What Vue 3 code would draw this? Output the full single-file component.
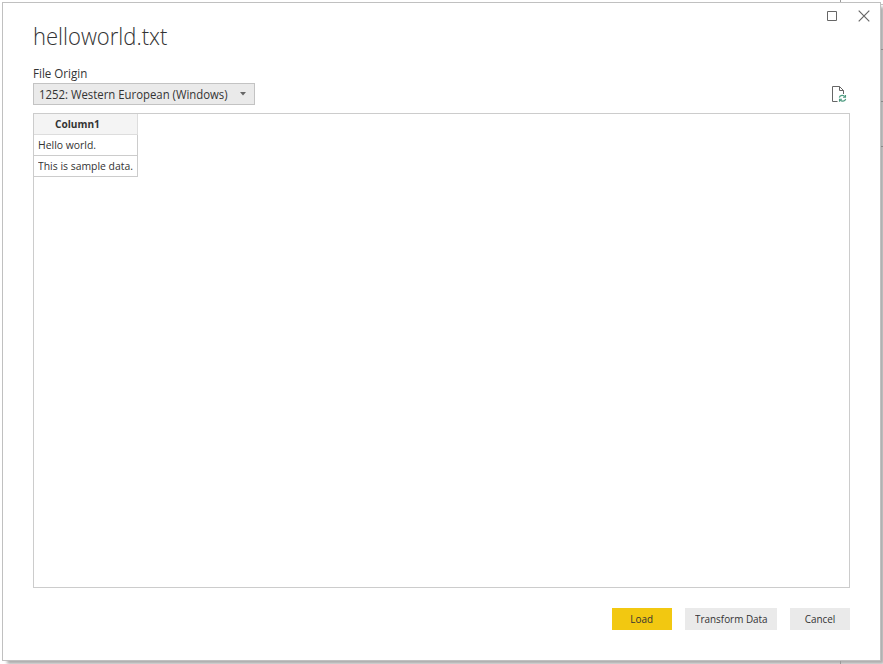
<script setup>
const columns = ['Column1']
const rows = [['Hello world.'], ['This is sample data.']]
const actions = [
  { label: 'Load', kind: 'primary' },
  { label: 'Transform Data', kind: 'wide' },
  { label: 'Cancel', kind: 'plain' },
]
</script>

<template>
  <div class="desktop">
    <i class="tick tick-top"></i>
    <i class="tick tick-bottom"></i>
    <i class="edge edge-a"></i>
    <i class="edge edge-b"></i>
    <i class="edge edge-c"></i>
    <i class="edge edge-d"></i>
    <section class="dialog">
      <div class="window-controls">
        <svg width="12" height="12" viewBox="0 0 12 12"><path d="M1.5 1.5h9v9h-9z" fill="none" stroke="#666" /></svg>
        <svg width="12" height="12" viewBox="0 0 12 12"><path d="M.7.7l10.6 10.6M11.3.7L.7 11.3" fill="none" stroke="#666" stroke-width="1.2" /></svg>
      </div>
      <h1><span>helloworld.txt</span></h1>
      <div class="label"><span>File Origin</span></div>
      <div class="toolbar">
        <button class="select">
          <span>1252: Western European (Windows)</span>
          <svg width="6" height="4" viewBox="0 0 6 4"><path d="M0 0h6L3 3.6z" fill="#666" /></svg>
        </button>
        <svg class="refresh" width="16" height="18" viewBox="0 0 16 18">
          <path d="M6.500 16.500h-5v-15h7l4 4v3.500M8.500 1.500v4h4" fill="none" stroke="#666" />
          <path d="M8.300 12.500c.8-2.700 4.200-2.800 5.600-.8M14.700 14c-.8 2.700-4.200 2.800-5.600.8" fill="none" stroke="#4d9b80" stroke-width="1.200" />
          <path d="M14.500 10v2.300H12M8.500 16.700v-2.400H11" fill="none" stroke="#4d9b80" stroke-width="1.100" />
        </svg>
      </div>
      <div class="preview">
        <table>
          <thead><tr><th v-for="c in columns" :key="c"><span>{{ c }}</span></th></tr></thead>
          <tbody>
            <tr v-for="(r, i) in rows" :key="i"><td v-for="v in r" :key="v"><span>{{ v }}</span></td></tr>
          </tbody>
        </table>
      </div>
      <footer>
        <button v-for="a in actions" :key="a.label" :class="['action', a.kind]"><span>{{ a.label }}</span></button>
      </footer>
    </section>
  </div>
</template>

<style>
body { margin: 0; background: #fff; }
</style>

<style scoped>
* { box-sizing: border-box; }
.desktop { position: relative; width: 883px; height: 664px; overflow: hidden; padding: 2px 0 0 2px; font-family: "Open Sans", "Noto Sans", sans-serif; color: #333; }
.dialog { position: relative; width: 879px; height: 659px; display: flex; flex-direction: column; padding: 0 30px; background: #fff; border: 1px solid #c0c0c0; box-shadow: 4px 4px 3px -1px rgba(0, 0, 0, .32); }
.tick { position: absolute; left: 840px; width: 1px; background: #999; }
.tick-top { top: 0; height: 2px; }
.tick-bottom { top: 661px; height: 3px; z-index: 1; }
.edge { position: absolute; left: 881px; width: 2px; height: 1px; background: #888; z-index: 1; }
.edge-a { top: 4px; background: #c0c0c0; }
.edge-b { top: 49px; }
.edge-c { top: 101px; }
.edge-d { top: 146px; }
.window-controls { position: absolute; top: 7px; right: 10px; display: flex; gap: 20px; }
.window-controls svg { display: block; }
span { display: inline-block; white-space: nowrap; transform-origin: left center; }
h1 { height: 36px; margin: 15px 0 0; font-size: 23px; line-height: 36px; font-weight: 300; }
h1 span { transform: scaleX(.957); }
.label { height: 18px; margin-top: 9px; padding-top: 2px; font-size: 12px; line-height: 18px; }
.label span { transform: scaleX(.965); }
.toolbar { height: 22px; margin-top: 2px; display: flex; justify-content: space-between; }
button { font-family: inherit; color: inherit; margin: 0; }
.select { width: 222px; height: 22px; padding: 0 8px 0 5px; border: 1px solid #c3c3c3; background: #eaeaea; display: flex; align-items: center; justify-content: space-between; font-size: 12px; }
.select span { padding-top: 1px; transform: scaleX(.947); }
.select svg { flex-shrink: 0; }
.refresh { margin: 2px 3px 0 0; }
.preview { height: 475px; margin-top: 8px; border: 1px solid #ccc; }
table { border-collapse: separate; border-spacing: 0; width: 104px; font-size: 11px; table-layout: fixed; }
th, td { height: 21px; padding: 0 4px; border-right: 1px solid #ccc; border-bottom: 1px solid #ccc; line-height: 18px; text-align: left; vertical-align: top; }
th span, td span { display: block; margin-top: 1px; height: 18px; }
td span { transform: scaleX(.946); }
th { background: #f4f4f4; border-color: #ddd; font-weight: 700; padding-left: 21px; }
th span { transform: scaleX(.92); }
footer { display: flex; justify-content: flex-end; gap: 13px; margin-top: 20px; }
.action { width: 60px; height: 22px; padding: 0 0 2px; border: 0; background: #eaeaea; font-size: 11px; display: flex; justify-content: center; align-items: center; }
.action span { transform-origin: center; transform: scaleX(.9); }
.wide { width: 92px; }
.primary { background: #f2c811; }
</style>
